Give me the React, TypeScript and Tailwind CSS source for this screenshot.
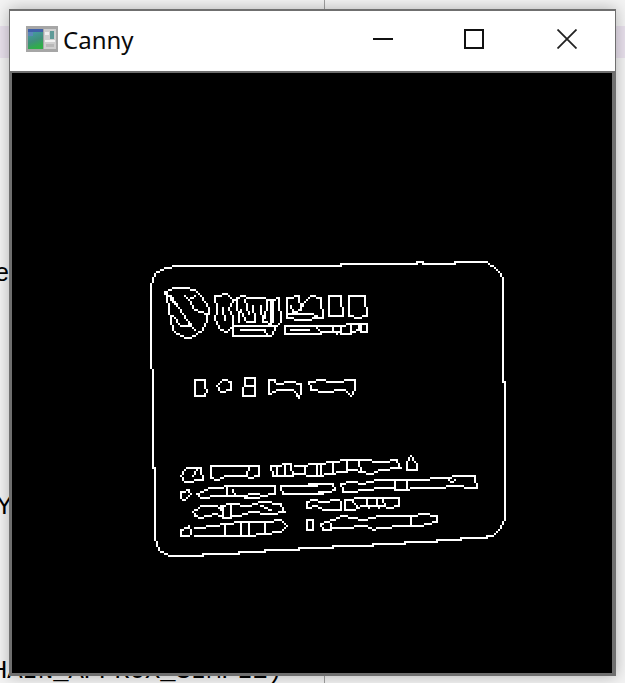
type Group = { x: number; y: number; k: number; paths: string[] };

const groups: Group[] = [
  {
    x: 0,
    y: 0,
    k: 1,
    paths: [
      "M177,266 L168,267 L160,269 L155,273 L152,280 L151,285 L151,368 L153,369 L153,467 L155,468 L155,535 L157,545 L160,552 L170,555 L203,555 L203,554 L238,554 L238,552 L265,552 L265,550 L298,550 L298,548 L333,548 L333,546 L372,546 L372,544 L404,544 L404,542 L436,542 L436,540 L460,540 L460,538 L486,538 L486,536 L493,536 L497,532 L500,528 L502,523 L504,517 L505,381 L503,381 L503,279 L501,273 L495,267 L487,262 L454,262 L454,264 L422,264 L422,262 L416,262 L416,264 L340,264 L340,266 Z",
    ],
  },
  {
    x: 145,
    y: 255,
    k: 1 / 3,
    paths: [
      "M60,108 L90,100 L120,97 L150,105 L170,120 L185,145 L190,165 L188,195 L175,222 L150,240 L130,248 L105,245 L85,225 L75,195 L70,165 L68,130 Z",
      "M62,112 L100,160 L135,210 M75,125 L115,175 L150,225 M85,180 L110,215 L135,210 M118,120 L130,135 L148,122 M130,135 L150,165 L185,178",
      "M210,125 L245,118 L262,135 L290,125 L320,130 L350,128 L375,135 L400,130 L405,200 L395,210 L375,240 L265,240 L262,210 L245,230 L225,225 L210,195 L218,165 Z",
      "M235,160 L240,195 M262,135 L250,165 L265,180 L262,205 M275,135 L280,200 M285,165 L305,200 L330,200 L322,155 M300,135 L310,175 M350,150 L355,200 L375,205 L375,140 M365,140 L362,190 M385,140 L385,200 M270,210 L390,210 M290,225 L360,225 L365,238",
      "M425,130 L460,125 L470,160 L480,140 L500,125 L530,130 L535,190 L470,192 L425,190 Z M440,150 L445,170 L465,165 M430,175 L470,178 L500,175 L515,185",
      "M550,125 L590,125 L595,185 L550,185 Z M610,125 L660,125 L665,180 L640,190 L610,185 Z",
      "M420,215 L500,210 L560,212 L640,205 L640,225 L610,237 L570,232 L500,235 L420,235 Z M650,205 L665,205 L665,232 L650,232 Z M440,225 L490,222 M510,215 L530,228 M590,215 L590,235 M620,210 L620,228 M560,212 L575,238",
      "M150,375 L178,375 L178,395 L187,405 L178,422 L150,422 Z",
      "M215,395 L235,375 L260,378 L260,405 L230,410 Z",
      "M300,370 L330,370 L330,395 L300,395 Z M292,398 L295,420 L332,420 L332,400",
      "M370,375 L390,375 L395,385 L440,380 L468,385 L468,412 L460,428 L445,405 L400,405 L370,415 Z",
      "M492,378 L530,375 L560,382 L630,375 L630,405 L620,422 L600,405 L540,410 L495,405 Z",
    ],
  },
  {
    x: 145,
    y: 445,
    k: 1 / 3,
    paths: [
      "M105,90 L125,70 L170,70 L175,105 L120,108 Z M145,90 L155,75",
      "M200,65 L250,65 L270,60 L320,60 L340,65 L340,95 L320,100 L300,90 L265,95 L240,90 L220,105 L198,100 Z M310,65 L305,90",
      "M380,60 L440,58 L445,90 L385,92 Z M395,65 L395,85 M420,65 L420,85 M450,60 L530,55 L530,90 L445,88 M480,65 L480,82 M515,58 L515,88",
      "M107,140 L130,135 L135,145 L120,162 L107,160 Z",
      "M158,145 L190,130 L225,130 L240,125 L390,125 L390,145 L350,150 L340,160 L260,155 L245,150 L225,155 L165,160 Z M245,130 L245,155 M265,135 L270,150 L340,148",
      "M408,125 L490,122 L540,115 M408,125 L412,148 L490,148 L540,140",
      "M142,200 L165,182 L215,182 L225,195 L230,180 L260,175 L310,180 L350,170 L410,175 L420,200 L380,205 L320,200 L280,210 L240,218 L215,205 L165,218 L150,215 Z M235,180 L235,215 M255,180 L255,212 M350,180 L375,192",
      "M108,255 L130,245 L138,260 L130,272 L110,270 Z",
      "M150,250 L210,240 L240,235 L290,232 L360,230 L405,225 L428,245 L410,260 L360,265 L310,270 L245,272 L220,270 L150,272 M240,238 L240,270 M290,235 L290,272 M310,235 L310,268 M360,232 L360,262",
      "M485,225 L505,225 L505,255 L485,255 Z",
    ],
  },
  {
    x: 300,
    y: 445,
    k: 1 / 3,
    paths: [
      "M60,62 L80,48 L160,45 L185,45 L190,42 L240,48 L290,42 L300,68 L240,75 L210,85 L190,80 L165,75 L50,90 M100,50 L100,85 M140,50 L140,80 M175,50 L180,78",
      "M320,50 L335,35 L350,55 L350,75 L320,75 Z",
      "M0,125 L40,115 L100,118 L105,135 L60,145 L0,148",
      "M122,115 L150,110 L190,115 L230,105 L290,105 L340,103 L440,100 L470,92 L525,92 L532,130 L450,125 L420,130 L345,128 L320,135 L240,130 L150,140 L130,138 Z M285,110 L285,130 M320,110 L322,130 M440,100 L450,110 L465,105",
      "M20,170 L40,165 L70,168 L110,165 L125,172 L125,192 L70,195 L50,185 L20,190 Z",
      "M135,165 L190,160 L295,158 L298,185 L270,190 L250,185 L190,185 L165,195 L135,192 Z M160,170 L170,185 M200,165 L205,188 M230,165 L235,188 M250,162 L255,185",
      "M20,222 L40,222 L40,255 L20,255 Z",
      "M62,235 L100,225 L130,215 L190,222 L240,212 L330,212 L370,205 L410,210 L410,230 L360,242 L310,240 L240,248 L220,255 L200,245 L120,248 L70,255 Z M330,215 L335,240 M90,235 L90,250",
    ],
  },
];

// The edge map is a 300×300 image shown at 2×, so every line is walked on that coarse grid.
function edgeCells(): string {
  const cells = new Set<string>();
  const toCell = (v: number, o: number) => Math.floor((v - o) / 2);
  const line = (x0: number, y0: number, x1: number, y1: number) => {
    const dx = Math.abs(x1 - x0);
    const dy = Math.abs(y1 - y0);
    const sx = x0 < x1 ? 1 : -1;
    const sy = y0 < y1 ? 1 : -1;
    let err = dx - dy;
    let x = x0;
    let y = y0;
    for (;;) {
      cells.add(`${x},${y}`);
      if (x === x1 && y === y1) break;
      const e = 2 * err;
      if (e > -dy) {
        err -= dy;
        x += sx;
      }
      if (e < dx) {
        err += dx;
        y += sy;
      }
    }
  };
  for (const g of groups) {
    for (const d of g.paths) {
      let start: [number, number] | null = null;
      let prev: [number, number] | null = null;
      for (const tok of d.match(/[MLZ][^MLZ]*/g) ?? []) {
        if (tok[0] === "Z") {
          if (prev && start) line(prev[0], prev[1], start[0], start[1]);
          prev = start;
          continue;
        }
        const [a, b] = tok.slice(1).trim().split(",").map(Number);
        const p: [number, number] = [toCell(g.x + a * g.k, 12), toCell(g.y + b * g.k, 73)];
        if (tok[0] === "M") start = p;
        else if (prev) line(prev[0], prev[1], p[0], p[1]);
        prev = p;
      }
    }
  }
  let out = "";
  cells.forEach((c) => {
    const [x, y] = c.split(",").map(Number);
    out += `M${x * 2},${y * 2}h2v2h-2z`;
  });
  return out;
}

export default function App() {
  return (
    <div
      className="relative flex h-[683px] w-[625px] flex-col overflow-hidden bg-[#f3f3f3] text-black"
      style={{ fontFamily: '"Noto Sans", sans-serif' }}
    >
      <div className="absolute inset-y-0 left-[324px] w-px bg-[#a0a0a0]" />
      <div className="mt-[26px] h-[32px] w-full shrink-0 bg-[#e8e0ec]" />
      <div className="ml-[-5px] mt-[199px] shrink-0 text-[25px] leading-[30px]" style={{ fontFamily: '"Liberation Sans", sans-serif' }}>
        e
      </div>
      <div className="ml-[-4px] mt-[203px] shrink-0 text-[25px] leading-[30px]" style={{ fontFamily: '"Liberation Sans", sans-serif' }}>
        Y
      </div>
      <div
        className="ml-[-8px] mt-[137px] shrink-0 whitespace-nowrap text-[25.5px] leading-[30px]"
        style={{ fontFamily: '"Liberation Mono", monospace' }}
      >
        HAIN_APPROX_SIMPLE)
      </div>

      <div className="absolute left-[9px] top-[9px] flex h-[667px] w-[607px] flex-col bg-[#6f6f6f] pt-[2px] shadow-[0_0_14px_rgba(0,0,0,0.28)]">
        <div className="mx-[1px] flex h-[60px] shrink-0 items-center bg-white">
          <svg width="32" height="26" viewBox="0 0 32 26" className="ml-[16px] mb-[4px] shrink-0" shapeRendering="crispEdges">
            <defs>
              <linearGradient id="ic" x1="0" y1="0" x2="0.3" y2="1">
                <stop offset="0" stopColor="#4aa0b4" />
                <stop offset="0.65" stopColor="#3f8f7c" />
                <stop offset="1" stopColor="#2fae48" />
              </linearGradient>
            </defs>
            <rect width="32" height="26" fill="#a6a6a6" />
            <rect x="2" y="3" width="15" height="20" fill="url(#ic)" />
            <rect x="2" y="3" width="15" height="3" fill="#3f5fa8" />
            <rect x="2" y="6" width="5" height="4" fill="#5a86b8" />
            <rect x="18" y="3" width="12" height="20" fill="#cfcfcf" />
            <rect x="24" y="5" width="4" height="8" fill="#5f9a98" />
            <rect x="19" y="6" width="4" height="3" fill="#efefef" />
            <rect x="19" y="14" width="10" height="2" fill="#f2f2f2" />
            <rect x="20" y="18" width="8" height="3" fill="#b8b8b8" />
          </svg>
          <span className="ml-[5px] mb-[2px] text-[24px] leading-none text-[#0a0a0a]">Canny</span>
          <div className="ml-auto mr-[2px] flex">
            <div className="flex h-[60px] w-[92px] items-center justify-center">
              <svg width="20" height="20" viewBox="0 0 20 20" className="mb-[4px]">
                <path d="M0,10 H20" stroke="#111" strokeWidth="2" />
              </svg>
            </div>
            <div className="flex h-[60px] w-[92px] items-center justify-center">
              <svg width="20" height="20" viewBox="0 0 20 20" className="mb-[4px] mr-[2px]">
                <rect x="1" y="1" width="18" height="18" fill="none" stroke="#111" strokeWidth="2" />
              </svg>
            </div>
            <div className="flex h-[60px] w-[92px] items-center justify-center">
              <svg width="20" height="20" viewBox="0 0 20 20" className="mb-[4px]">
                <path d="M0.5,0.5 L19.5,19.5 M19.5,0.5 L0.5,19.5" stroke="#222" strokeWidth="1.8" />
              </svg>
            </div>
          </div>
        </div>
        <div className="mt-[2px] flex px-[3px]">
          <div className="h-[600px] w-[600px] bg-black">
            <svg width="600" height="600" viewBox="0 0 600 600" shapeRendering="crispEdges">
              <path d={edgeCells()} fill="#fff" />
            </svg>
          </div>
        </div>
      </div>
    </div>
  );
}
